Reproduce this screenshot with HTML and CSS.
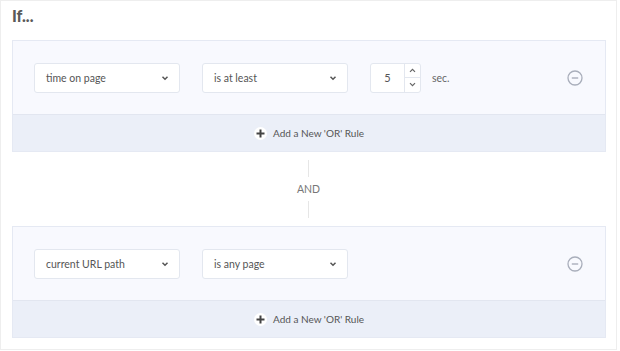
FILE: index.html
```html
<!DOCTYPE html>
<html lang="en">

<head>
    <meta charset="UTF-8">
    <meta name="viewport" content="width=device-width, initial-scale=1.0">
    <title>Rules</title>
    <link rel="stylesheet" href="styles.css">
</head>

<body>
    <div class="panel">
        <h2 class="title">If...</h2>

        <div class="group">
            <div class="rule">
                <div class="select">
                    <span>time on page</span>
                    <svg class="chev" width="8" height="6" viewBox="0 0 8 6"><path d="M1.5 1.8 L4 4.2 L6.5 1.8" fill="none" stroke="#555" stroke-width="1.5"/></svg>
                </div>
                <div class="select">
                    <span>is at least</span>
                    <svg class="chev" width="8" height="6" viewBox="0 0 8 6"><path d="M1.5 1.8 L4 4.2 L6.5 1.8" fill="none" stroke="#555" stroke-width="1.5"/></svg>
                </div>
                <div class="number">
                    <span class="num-value">5</span>
                    <div class="spin">
                        <div class="spin-btn"><svg width="7" height="5" viewBox="0 0 7 5"><path d="M1 3.8 L3.5 1.3 L6 3.8" fill="none" stroke="#666" stroke-width="1.2"/></svg></div>
                        <div class="spin-btn"><svg width="7" height="5" viewBox="0 0 7 5"><path d="M1 1.2 L3.5 3.7 L6 1.2" fill="none" stroke="#666" stroke-width="1.2"/></svg></div>
                    </div>
                </div>
                <span class="unit">sec.</span>
                <svg class="remove" width="16" height="16" viewBox="0 0 16 16"><circle cx="8" cy="8" r="7" fill="none" stroke="#a9aebb" stroke-width="1.3"/><path d="M4.8 8 H11.2" stroke="#a9aebb" stroke-width="1.4"/></svg>
            </div>
            <div class="add-row">
                <span class="plus"><svg width="9" height="9" viewBox="0 0 9 9"><path d="M4.5 0.5 V8.5 M0.5 4.5 H8.5" stroke="#444" stroke-width="2"/></svg></span>
                Add a New 'OR' Rule
            </div>
        </div>

        <div class="connector">
            <div class="line"></div>
            <span class="and">AND</span>
            <div class="line"></div>
        </div>

        <div class="group">
            <div class="rule">
                <div class="select">
                    <span>current URL path</span>
                    <svg class="chev" width="8" height="6" viewBox="0 0 8 6"><path d="M1.5 1.8 L4 4.2 L6.5 1.8" fill="none" stroke="#555" stroke-width="1.5"/></svg>
                </div>
                <div class="select">
                    <span>is any page</span>
                    <svg class="chev" width="8" height="6" viewBox="0 0 8 6"><path d="M1.5 1.8 L4 4.2 L6.5 1.8" fill="none" stroke="#555" stroke-width="1.5"/></svg>
                </div>
                <svg class="remove" width="16" height="16" viewBox="0 0 16 16"><circle cx="8" cy="8" r="7" fill="none" stroke="#a9aebb" stroke-width="1.3"/><path d="M4.8 8 H11.2" stroke="#a9aebb" stroke-width="1.4"/></svg>
            </div>
            <div class="add-row">
                <span class="plus"><svg width="9" height="9" viewBox="0 0 9 9"><path d="M4.5 0.5 V8.5 M0.5 4.5 H8.5" stroke="#444" stroke-width="2"/></svg></span>
                Add a New 'OR' Rule
            </div>
        </div>
    </div>
</body>

</html>
```

FILE: styles.css
```css
body {
    margin: 0;
    background-color: #fff;
    font-family: "Lato", "Open Sans", sans-serif;
    color: #555;
}

.panel {
    width: 615px;
    height: 348px;
    border: 1px solid #eeeeee;
    box-sizing: content-box;
}

.title {
    margin: 0;
    padding: 5px 0 0 11px;
    height: 39px;
    box-sizing: border-box;
    font-size: 16px;
    font-weight: 900;
    color: #595959;
}

.group {
    margin: 0 10px 0 11px;
    border: 1px solid #e5e9f3;
    background-color: #f8f9fe;
}

.rule {
    display: flex;
    align-items: center;
    height: 73px;
    padding: 0 22px 0 21px;
    gap: 22px;
    border-bottom: 1px solid #e2e6f0;
}

.select {
    display: flex;
    align-items: center;
    justify-content: space-between;
    width: 146px;
    height: 30px;
    box-sizing: border-box;
    padding: 0 10px 0 11px;
    background-color: #fff;
    border: 1px solid #e3e7ef;
    border-radius: 3px;
    font-size: 10.5px;
    color: #555;
}

.number {
    display: flex;
    width: 51px;
    height: 30px;
    box-sizing: border-box;
    background-color: #fff;
    border: 1px solid #e3e7ef;
    border-radius: 3px;
}

.num-value {
    flex: 1;
    display: flex;
    align-items: center;
    justify-content: center;
    font-size: 11px;
    color: #555;
    border-right: 1px solid #e3e7ef;
}

.spin {
    width: 15px;
    display: flex;
    flex-direction: column;
}

.spin-btn {
    flex: 1;
    display: flex;
    align-items: center;
    justify-content: center;
}

.spin-btn + .spin-btn {
    border-top: 1px solid #e3e7ef;
}

.unit {
    margin-left: -11px;
    font-size: 10.5px;
    color: #666;
}

.remove {
    margin-left: auto;
}

.add-row {
    display: flex;
    align-items: center;
    justify-content: center;
    gap: 6px;
    height: 36px;
    background-color: #ebeff8;
    font-size: 10px;
    color: #555;
}

.plus {
    display: flex;
    align-items: center;
    justify-content: center;
    width: 13px;
    height: 13px;
    border-radius: 50%;
    background-color: #fff;
}

.connector {
    display: flex;
    flex-direction: column;
    align-items: center;
    height: 74px;
    padding: 8px 0 8px;
    box-sizing: border-box;
}

.line {
    flex: 1;
    border-left: 1px solid #e6e6e6;
}

.and {
    padding: 6px 0;
    font-size: 10.5px;
    color: #777;
}
```
